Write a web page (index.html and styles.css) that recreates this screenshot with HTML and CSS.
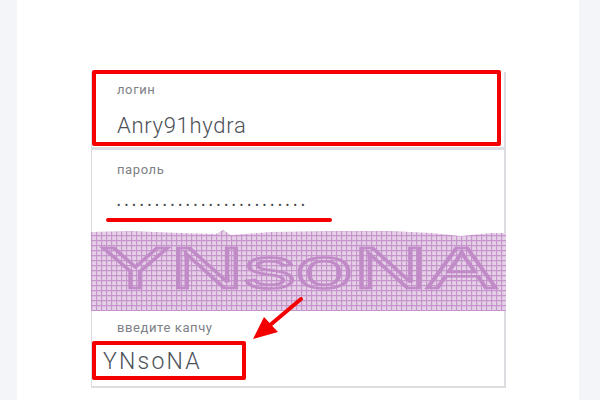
FILE: index.html
```html
<!DOCTYPE html>
<html>
<head>
    <title>Вход</title>
    <meta name="viewport" content="width=device-width, initial-scale=1.0">
    <link rel="stylesheet" href="styles.css">
</head>
<body>
    <div class="panel">
        <form class="login-form">
            <div class="field field-login">
                <label>логин</label>
                <div class="value">Anry91hydra</div>
                <div class="mark mark-login"></div>
            </div>
            <div class="field field-password">
                <label>пароль</label>
                <div class="value dots">•••••••••••••••••••••••••</div>
                <div class="mark-line"></div>
            </div>
            <div class="captcha">
                <svg width="415" height="81" viewBox="0 0 415 81">
                    <defs>
                        <pattern id="grid" width="5" height="5" patternUnits="userSpaceOnUse">
                            <rect width="5" height="5" fill="#e5d0e8"/>
                            <path d="M0 .5H5M.5 0V5" stroke="#c595cb" stroke-width="1.3"/>
                        </pattern>
                    </defs>
                    <path fill="url(#grid)" d="M0 2 40 1 90 3 125 4 132 0 140 5 180 2 240 1 300 1 340 3 370 6 400 3 415 3V81H0Z"/>
                    <text class="captcha-text" x="10" y="58" textLength="395" lengthAdjust="spacingAndGlyphs">YNsoNA</text>
                </svg>
            </div>
            <div class="field field-captcha">
                <label>введите капчу</label>
                <div class="value">YNsoNA</div>
                <div class="mark mark-captcha"></div>
            </div>
            <svg class="arrow" width="60" height="50" viewBox="0 0 60 50">
                <path d="M50 4 18 31" stroke="#f40000" stroke-width="4" stroke-linecap="round"/>
                <path d="M2 44 13 22 27 37Z" fill="#f40000"/>
            </svg>
        </form>
    </div>
</body>
</html>
```

FILE: styles.css
```css
:root {
    --page: #f3f5f8;
    --border: #dcdde0;
    --red: #f40000;
    --label: #7d8084;
    --text: #4c5157;
}

* {
    margin: 0;
    padding: 0;
    box-sizing: border-box;
}

body {
    background-color: var(--page);
    font-family: Roboto, "Noto Sans", sans-serif;
    height: 400px;
    overflow: hidden;
}

.panel {
    background: #fff;
    width: 562px;
    height: 400px;
    margin-left: 17px;
    padding: 72px 0 0 74px;
}

.login-form {
    position: relative;
    width: 415px;
    height: 316px;
    border: 1px solid var(--border);
    border-width: 0 2px 2px 1px;
}

.field {
    position: relative;
    padding: 10px 0 0 25px;
}

.field-login {
    height: 78px;
    border-bottom: 3px solid var(--border);
}

.field-password {
    height: 80px;
    padding-top: 12px;
}

.field-captcha {
    height: 76px;
    padding-top: 9px;
}

label {
    display: block;
    color: var(--label);
    font-size: 13px;
    letter-spacing: 0.6px;
    line-height: 16px;
}

.value {
    color: var(--text);
    font-size: 22px;
    font-weight: 300;
    line-height: 26px;
    margin-top: 15px;
    letter-spacing: 0.7px;
}

.field-password .value {
    margin-top: 13px;
}

.field-captcha .value {
    margin-top: 13px;
    margin-left: -14px;
    font-size: 23px;
    letter-spacing: 2.2px;
}

.dots {
    font-size: 10px;
    font-weight: 400;
    letter-spacing: 4.3px;
    color: #3d4349;
    line-height: 30px;
}

.captcha {
    height: 81px;
    margin-left: -1px;
}

.captcha svg {
    display: block;
    filter: blur(0.4px);
}

.captcha-text {
    font-family: "Liberation Sans", sans-serif;
    font-size: 58px;
    fill: none;
    stroke: #c18bc8;
    stroke-width: 2.5px;
}

.mark {
    position: absolute;
    border: 4px solid var(--red);
    border-radius: 2px;
}

.mark-login {
    left: 0;
    top: -2px;
    width: 409px;
    height: 76px;
}

.mark-captcha {
    left: 0;
    top: 30px;
    width: 154px;
    height: 39px;
}

.mark-line {
    position: absolute;
    left: 14px;
    top: 68px;
    width: 226px;
    height: 4px;
    border-radius: 2px;
    background: var(--red);
}

.arrow {
    position: absolute;
    left: 159px;
    top: 223px;
}
```
